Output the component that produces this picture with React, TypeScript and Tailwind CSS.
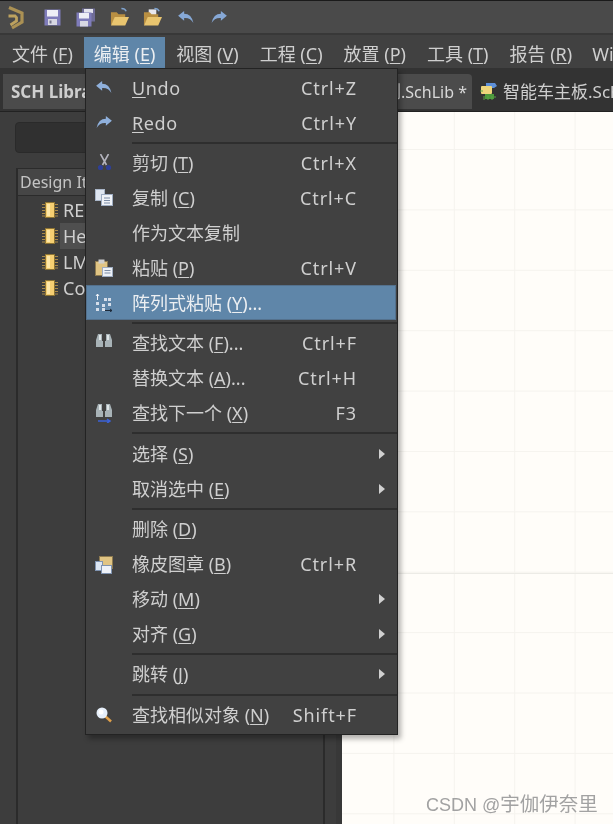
import { type ReactNode } from "react"

const FONT = "font-['Noto_Sans','Noto_Sans_CJK_SC',sans-serif]"

// toolbar + menu icons
function Logo() {
  return (
    <svg width="18" height="25" viewBox="0 0 18 25">
      <path d="M2 2.5 L15 8 V17 L5 23" stroke="#ab9154" strokeWidth="3.2" fill="none" />
      <path d="M1.5 11 H8 L9.5 12.5 V16 L3.5 20" stroke="#bda25f" strokeWidth="2.8" fill="none" />
    </svg>
  )
}

function Floppy() {
  return (
    <svg width="17" height="17" viewBox="0 0 17 17">
      <rect x="0.5" y="0.5" width="16" height="16" fill="#7f7cba" />
      <rect x="3" y="1" width="11" height="6.5" fill="#eeeef6" />
      <rect x="4" y="10" width="9" height="6" fill="#d8d8e2" />
      <rect x="5.5" y="11.5" width="2" height="3" fill="#77778f" />
    </svg>
  )
}

function SaveAll() {
  return (
    <svg width="20" height="19" viewBox="0 0 20 19">
      <rect x="6" y="0.5" width="13" height="13" fill="#6f6c97" />
      <rect x="8" y="1" width="9" height="4" fill="#e4e4ee" />
      <rect x="0.5" y="4.5" width="15" height="14" fill="#7f7cba" />
      <rect x="3" y="5" width="10" height="5.5" fill="#eeeef6" />
      <rect x="4" y="13" width="8" height="5.5" fill="#d8d8e2" />
    </svg>
  )
}

function Folder({ doc }: { doc?: boolean }) {
  return (
    <svg width="19" height="20" viewBox="0 0 20 20">
      {doc && <rect x="6" y="2" width="8" height="8" fill="#e8e8ee" />}
      <path d="M1 5 H7 L9 7 H16 V10 H6 L1 19 Z" fill="#b98f42" />
      <path d="M5 10 H20 L16 19 H1 Z" fill="#e9c56f" />
      <path d="M12 1 Q16 1 17 4" stroke="#7fa3cf" strokeWidth="1.5" fill="none" />
    </svg>
  )
}

function Arrow({ flip, color = "#8fb0dc" }: { flip?: boolean; color?: string }) {
  return (
    <svg width="18" height="13" viewBox="0 0 18 14" className={flip ? "-scale-x-100" : ""}>
      <path d="M0.5 5 L7 0 V3 Q15 3 17 13 Q14 7 7 7.5 V10.5 Z" fill={color} />
    </svg>
  )
}

function Scissors() {
  return (
    <svg width="15" height="17" viewBox="0 0 15 17">
      <path d="M3.5 0 L9.5 11 M11.5 0 L5.5 11" stroke="#b4b4be" strokeWidth="1.6" />
      <circle cx="3.5" cy="13.5" r="2.6" fill="#2e3f96" />
      <circle cx="11.5" cy="13.5" r="2.6" fill="#2e3f96" />
    </svg>
  )
}

function Copy() {
  return (
    <svg width="18" height="17" viewBox="0 0 18 17">
      <rect x="0.5" y="0.5" width="9" height="11" fill="#dfe6f0" stroke="#aab6c8" />
      <rect x="6.5" y="5.5" width="11" height="11" fill="#f0f3f8" stroke="#9fadc2" />
      <path d="M9 9 H15 M9 11.5 H15 M9 14 H15" stroke="#7d8da6" />
    </svg>
  )
}

function Paste() {
  return (
    <svg width="18" height="18" viewBox="0 0 18 18">
      <rect x="0.5" y="2.5" width="12" height="14" fill="#e0c483" stroke="#8d7a50" />
      <rect x="3.5" y="0.5" width="6" height="4" fill="#cfcfcf" />
      <rect x="7.5" y="8.5" width="10" height="9" fill="#eef2f8" stroke="#9fadc2" />
      <path d="M9.5 11.5 H15.5 M9.5 14 H15.5" stroke="#7d8da6" />
    </svg>
  )
}

function ArrayPaste() {
  return (
    <svg width="18" height="19" viewBox="0 0 18 19">
      <path d="M2.5 7 V1 M1 3 L2.5 1 L4 3" stroke="#eef2f8" fill="none" />
      <path d="M10 17.5 H17 M15 16 L17 17.5 L15 19" stroke="#1d2a3a" fill="none" />
      {[[1, 9], [1, 15], [7, 11], [7, 15], [13, 5], [13, 10], [9, 5]].map(([x, y]) => (
        <rect key={`${x}-${y}`} x={x} y={y} width="3" height="3" fill="#d5deea" />
      ))}
    </svg>
  )
}

function Binoculars({ next }: { next?: boolean }) {
  return (
    <svg width="18" height="20" viewBox="0 0 18 20">
      <path d="M3 1 H7 V8 H8 V14 H1 V7 Z M11 1 H15 L17 7 V14 H10 V8 H11 Z" fill="#a8b3b7" />
      <path d="M4 2 H6 V7 H4 Z M12 2 H14 V7 H12 Z" fill="#dfe6e8" />
      {next && <path d="M3 18 H14 M12 16 L15 18 L12 20" stroke="#3b62d8" strokeWidth="1.5" fill="none" />}
    </svg>
  )
}

function Rubber() {
  return (
    <svg width="18" height="19" viewBox="0 0 18 19">
      <rect x="4.5" y="1.5" width="13" height="12" fill="#e0c483" stroke="#8d7a50" />
      <rect x="0.5" y="6.5" width="7" height="9" fill="#dce6f2" stroke="#7f93b0" />
      <rect x="6.5" y="10.5" width="10" height="8" fill="#eef2f8" stroke="#7f93b0" />
    </svg>
  )
}

function Magnifier() {
  return (
    <svg width="17" height="16" viewBox="0 0 17 16">
      <path d="M9 9 L15 14.5" stroke="#e0a04a" strokeWidth="2.5" />
      <circle cx="6" cy="6" r="5.5" fill="#e6effa" />
      <circle cx="5" cy="5" r="2.5" fill="#ffffff" />
    </svg>
  )
}

function Chip() {
  return (
    <svg width="16" height="16" viewBox="0 0 16 16" className="shrink-0">
      <path d="M0 2.5 H16 M0 5.5 H16 M0 8.5 H16 M0 11.5 H16 M0 14 H16" stroke="#a8894a" />
      <rect x="3.5" y="0.5" width="9" height="15" fill="#f6cf72" stroke="#8d7434" />
      <rect x="5" y="2" width="3" height="12" fill="#fde7a8" />
    </svg>
  )
}

function TabIcon() {
  return (
    <svg width="18" height="19" viewBox="0 0 18 19" className="shrink-0">
      <path d="M6 1 H15 L17 4 L14 6 H6 Z" fill="#5d8fd8" />
      <rect x="1" y="4" width="11" height="8" rx="1" fill="#eed67c" />
      <path d="M5 12 H14 V17 H5 Z" fill="#4c9a3c" />
      <path d="M0 9 H3 M4 18 V14 M8 18 V14 M12 18 V14 M16 15 H14" stroke="#5aa546" />
    </svg>
  )
}

function Label({ zh, m, after = ")" }: { zh: string; m: string; after?: string }) {
  return (
    <>
      {zh} (<span className="underline underline-offset-2 decoration-1">{m}</span>
      {after}
    </>
  )
}

type Item =
  | "sep"
  | { icon?: ReactNode; label: ReactNode; key?: string; sub?: boolean; active?: boolean }

const items: Item[] = [
  { icon: <Arrow />, label: <span className="tracking-[0.6px]"><span className="underline underline-offset-2 decoration-1">U</span>ndo</span>, key: "Ctrl+Z" },
  { icon: <Arrow flip />, label: <span className="tracking-[0.6px]"><span className="underline underline-offset-2 decoration-1">R</span>edo</span>, key: "Ctrl+Y" },
  "sep",
  { icon: <Scissors />, label: <Label zh="剪切" m="T" />, key: "Ctrl+X" },
  { icon: <Copy />, label: <Label zh="复制" m="C" />, key: "Ctrl+C" },
  { label: "作为文本复制" },
  { icon: <Paste />, label: <Label zh="粘贴" m="P" />, key: "Ctrl+V" },
  { icon: <ArrayPaste />, label: <Label zh="阵列式粘贴" m="Y" after=")..." />, active: true },
  "sep",
  { icon: <Binoculars />, label: <Label zh="查找文本" m="F" after=")..." />, key: "Ctrl+F" },
  { label: <Label zh="替换文本" m="A" after=")..." />, key: "Ctrl+H" },
  { icon: <Binoculars next />, label: <Label zh="查找下一个" m="X" />, key: "F3" },
  "sep",
  { label: <Label zh="选择" m="S" />, sub: true },
  { label: <Label zh="取消选中" m="E" />, sub: true },
  "sep",
  { label: <Label zh="删除" m="D" /> },
  { icon: <Rubber />, label: <Label zh="橡皮图章" m="B" />, key: "Ctrl+R" },
  { label: <Label zh="移动" m="M" />, sub: true },
  { label: <Label zh="对齐" m="G" />, sub: true },
  "sep",
  { label: <Label zh="跳转" m="J" />, sub: true },
  "sep",
  { icon: <Magnifier />, label: <Label zh="查找相似对象" m="N" />, key: "Shift+F" },
]

const menus = [
  { zh: "文件", m: "F" },
  { zh: "编辑", m: "E", open: true },
  { zh: "视图", m: "V" },
  { zh: "工程", m: "C" },
  { zh: "放置", m: "P" },
  { zh: "工具", m: "T" },
  { zh: "报告", m: "R" },
]

const tree = ["RES", "Header", "LM", "Co"]

function EditMenu() {
  return (
    <div className="absolute left-[85px] top-[68px] z-10 w-[313px] h-[667px] border border-[#232323] bg-[#414141] pt-[1px] shadow-[3px_4px_5px_rgba(0,0,0,0.3)]">
      {items.map((item, i) =>
        item === "sep" ? (
          <div key={i} className="h-[5.4px] flex items-center pl-[46px]">
            <div className="h-[2px] w-full bg-[#2e2e2e]" />
          </div>
        ) : (
          <div
            key={i}
            className={`flex items-center h-[35px] ${item.active ? "bg-[#5f86a9] shadow-[inset_0_0_0_1px_#54718d] text-[#eceff2] mr-[1px]" : "text-[#cfcfcf]"}`}
          >
            <div className="w-[46px] shrink-0 flex justify-center pr-[10px]">{item.icon}</div>
            <div className="flex-1 whitespace-nowrap">{item.label}</div>
            {item.key && <div className="mr-[40px] tracking-[0.9px]">{item.key}</div>}
            {item.sub && <div className="mr-[12px] w-0 h-0 border-y-[5px] border-y-transparent border-l-[6px] border-l-[#d0d0d0]" />}
          </div>
        ),
      )}
    </div>
  )
}

export default function App() {
  return (
    <div className={`relative w-[613px] h-[824px] overflow-hidden bg-[#3c3c3c] text-[18px] leading-none text-[#cfcfcf] blur-[0.4px] ${FONT}`}>
      {/* Toolbar */}
      <div className="h-[35px] border-t border-b-2 border-t-[#1a1a1a] border-b-[#383838] bg-[#4a4a4a] flex items-center pl-[7px]">
        <div className="w-[30px]"><Logo /></div>
        <div className="flex items-center gap-[15px] pl-[7px]">
          <Floppy />
          <SaveAll />
          <div className="-mx-[1px]"><Folder /></div>
          <Folder doc />
          <Arrow color="#86a8d6" />
          <Arrow flip color="#86a8d6" />
        </div>
      </div>

      {/* Menu bar */}
      <div className="h-[33px] pt-[2px] bg-[#414141] flex gap-[2px] pl-[2.5px] whitespace-nowrap">
        {menus.map((menu) => (
          <div
            key={menu.zh}
            className={`h-full flex items-center px-[9.5px] pt-[2px] ${menu.open ? "bg-[#5f86a9] text-[#eceff2]" : ""}`}
          >
            <Label zh={menu.zh} m={menu.m} />
          </div>
        ))}
        <div className="h-full flex items-center pt-[2px] pl-[8.5px]">Wi</div>
      </div>

      {/* Tabs */}
      <div className="h-[44px] bg-[#333333] flex items-end pb-[2px] pl-[3px] border-b border-[#222222] whitespace-nowrap text-[17px]">
        <div className="h-[35px] w-[118px] shrink-0 bg-[#4b4b4b] flex items-center pl-[8px] font-bold">SCH Library</div>
        <div className="h-[35px] w-[350px] ml-[1px] shrink-0 rounded-t-[4px] bg-[#4b4b4b] flex items-center justify-end pr-[5px] text-[#d8d8d8]">
          示例<span className="text-[16px]">.SchLib *</span>
        </div>
        <div className="flex items-center h-[35px] pl-[8px] gap-[5px] shrink-0">
          <TabIcon />
          <span>智能车主板.SchDoc</span>
        </div>
      </div>

      <div className="flex h-[712px]">
        {/* Left panel */}
        <div className="w-[342px] shrink-0 pl-[16px] pr-[18px] bg-[#3d3d3d] border-r-[6px] border-r-[#383838]">
          <div className="h-full border-r-2 border-[#2b2b2b] ml-0 -mr-[7px]">
            <div className="h-[56px] pt-[10px] -ml-[1px]">
              <div className="h-[31px] rounded-[4px] bg-[#303030] border border-[#2a2a2a]" />
            </div>
            <div className="h-[656px] border-l-2 border-[#2b2b2b]">
              <div className="h-[28px] bg-[#464646] border-t border-b border-[#2b2b2b] flex items-center pl-[2px] text-[16px] text-[#c4c4c4]">
                Design Items
              </div>
              <div className="pt-[1px] pl-[24px] text-[#cfcfcf]">
                {tree.map((name, i) => (
                  <div key={name} className="flex items-center h-[26px]">
                    <Chip />
                    <div className={`ml-[2px] pl-[3px] h-[26px] flex items-center ${i === 1 ? "bg-[#4f4f4f]" : ""}`}>{name}</div>
                  </div>
                ))}
              </div>
            </div>
          </div>
        </div>

        {/* Canvas */}
        <div className="relative flex-1 bg-[#fffdf9] bg-[linear-gradient(#f5f3ee_1px,transparent_1px),linear-gradient(90deg,#f5f3ee_1px,transparent_1px)] bg-[size:60.4px_60.4px] bg-[position:-9px_37px]">
          <div className="absolute left-0 right-0 top-[461px] h-[1px] bg-[#ecebe6]" />
        </div>
      </div>

      <EditMenu />

      <div className="absolute left-[426px] top-[795px] text-[18px] text-[#a2a2a2] whitespace-nowrap font-['Liberation_Sans','Noto_Sans_CJK_SC',sans-serif]">
        CSDN @<span className="text-[19.5px]">宇伽伊奈里</span>
      </div>
    </div>
  )
}
